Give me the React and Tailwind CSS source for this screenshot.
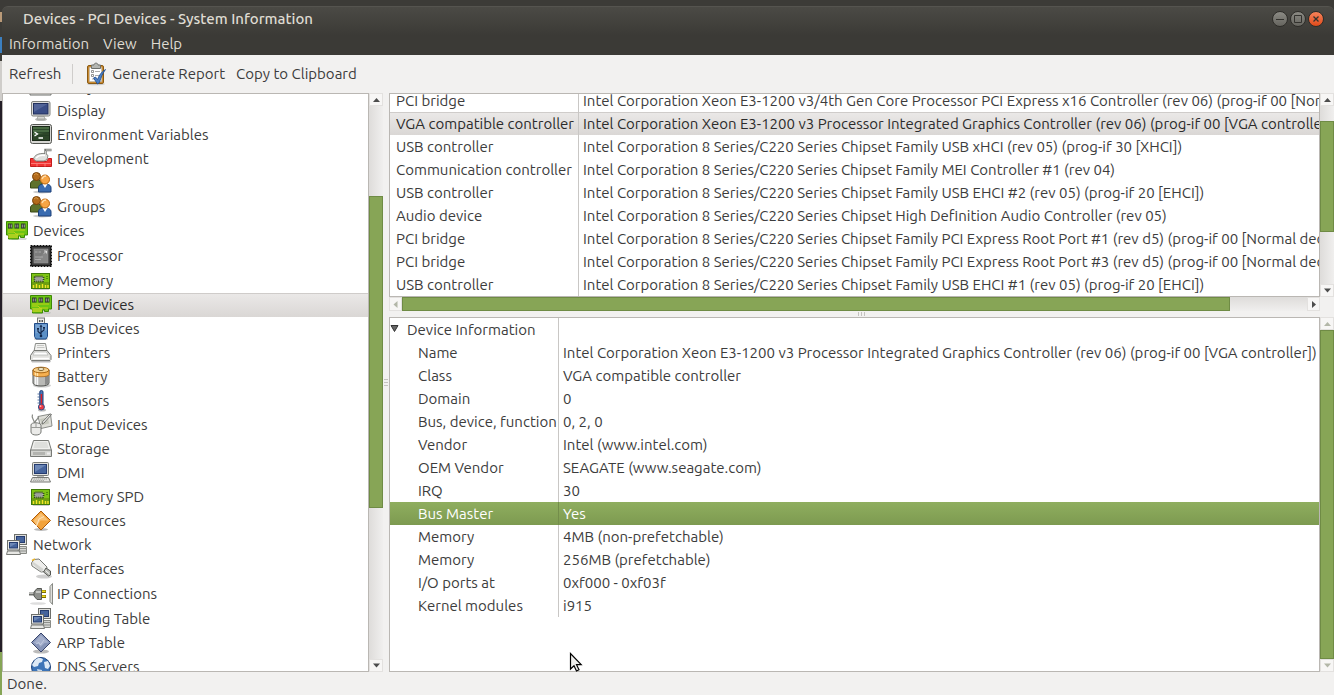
import React from "react";

const sheet = {
  filesystems: (
    <g>
      <path d="M3 6h17l2 8v6H1v-6z" fill="#e4e4e2" stroke="#6d6f6b" />
      <path d="M3 16h17v3H3z" fill="#b9bab7" />
    </g>
  ),
  display: (
    <g>
      <ellipse cx="12" cy="20.5" rx="6" ry="1.6" fill="#b9bab7" />
      <path d="M9 17h6l1 3H8z" fill="#d7d8d5" stroke="#8b8d89" strokeWidth=".6" />
      <rect x="2.500" y="2.500" width="18.500" height="14.500" rx="1.500" fill="#dcdcd9" stroke="#80827e" />
      <rect x="4.500" y="4.500" width="14.500" height="10.500" fill="#3a4d86" stroke="#22305c" />
      <path d="M5 5h13.500L5 13z" fill="#6274a5" opacity=".6" />
    </g>
  ),
  terminal: (
    <g>
      <rect x="1.500" y="1.500" width="21" height="19" rx="2" fill="#d6d6d3" stroke="#555753" />
      <rect x="3.500" y="3.500" width="17" height="14" fill="#2c4528" stroke="#1b2a1a" />
      <path d="M4 4h16v5L4 12z" fill="#5c8354" opacity=".6" />
      <path d="M4 6.500h16M4 9.500h16M4 12.500h16" stroke="#233c22" strokeWidth=".7" />
      <path d="M5.500 9l3 2-3 2M9.500 15h4.500" fill="none" stroke="#fff" strokeWidth="1.300" />
    </g>
  ),
  development: (
    <g>
      <path d="M1.500 11.500h4l2 3h10l2-3h3v8h-21z" fill="#f03433" stroke="#c41c1c" />
      <path d="M2 16.500h20M8 16.500v3M16 16.500v3" stroke="#ff8a86" strokeWidth=".8" />
      <path d="M4.500 12c1-4 5-6 12-5.500l2.500 2-1 4-3 1.500H7z" fill="#dfe0dd" stroke="#888a85" />
      <path d="M7 11c3-3 6-3 9-2.500" stroke="#fff" strokeWidth="1.500" fill="none" />
      <path d="M16.500 7V3H22.500" stroke="#777975" strokeWidth="2.400" fill="none" />
      <path d="M17 3h5M16.500 4v3" stroke="#dedfdc" strokeWidth=".8" />
    </g>
  ),
  people: (
    <g>
      <ellipse cx="13" cy="21" rx="9" ry="1.500" fill="#ccc" />
      <path d="M1.500 17v-4c0-3 3-4 6-4s5 1 6 4v4z" fill="#5e722c" stroke="#3a4a16" />
      <circle cx="7.500" cy="5.500" r="4" fill="#b36b1c" stroke="#7a4308" />
      <path d="M5 4q2-3 4 0" stroke="#d9963f" fill="none" />
      <path d="M9.500 21v-4c0-3 2-4 6-4s6.500 1 6.500 4v4z" fill="#3a6cb0" stroke="#1d417a" />
      <path d="M13.500 13l2.500 4 2.500-4z" fill="#fff" />
      <circle cx="16" cy="8.500" r="4.500" fill="#f7a545" stroke="#bf660c" />
      <path d="M13 8q1-3 4-3" stroke="#ffdba8" strokeWidth="1.500" fill="none" />
    </g>
  ),
  card: (
    <g>
      <path d="M8 19h14l-1 2H6z" fill="#bbb" opacity=".6" />
      <path d="M1.500 2.500h21v13.500h-3v2.500h-4V17h-2v3h-10v-4h-2z" fill="#6cc414" stroke="#3c8a05" />
      <path d="M3 11h17M3 13h6l2 2h8" stroke="#c5d316" fill="none" />
      <path d="M4 15v4M6 15v4M8 15v4M10 15v4M12 15v4" stroke="#e8dc2a" />
      <path d="M3 4.500h4.500v5H3zM9.500 4.500h4.500v5h-4.500zM16 4.500h4.500v5h-4.500z" fill="#2f3a2a" />
      <path d="M4.300 5.500v3M6.300 5.500v3M10.800 5.500v3M12.800 5.500v3M17.300 5.500v3M19.300 5.500v3" stroke="#b9bdb5" strokeWidth=".8" />
    </g>
  ),
  processor: (
    <g>
      <rect x="1.500" y="1.500" width="21" height="21" fill="none" stroke="#111" strokeDasharray="2 1" />
      <rect x="2.500" y="2.500" width="19" height="19" fill="#3d3d3d" stroke="#1a1a1a" />
      <rect x="5" y="5" width="14" height="14" fill="#7c7c7c" stroke="#9b9b9b" strokeWidth=".6" />
      <path d="M5 19L19 5v14z" fill="#929292" opacity=".5" />
      <path d="M6 8h2.500M9.500 8H12M6 13h8M6 15.500h6" stroke="#c4c4c4" strokeWidth="1.200" opacity=".6" />
      <path d="M15 7h2.500v2.500M17.500 7L15 9.500" stroke="#eee" strokeWidth=".8" fill="none" />
    </g>
  ),
  memory: (
    <g>
      <path d="M3 19h18l-1 2H4z" fill="#aaa" opacity=".6" />
      <rect x="2.500" y="4.500" width="18" height="15" fill="#7fc514" stroke="#3f7a08" />
      <path d="M3 13h17v6H3z" fill="#6d9f10" />
      <path d="M4.500 19v-3M7.500 19v-4M10.500 19v-3M13.500 19v-4M16.500 19v-3M19 19v-3" stroke="#f2e526" strokeWidth="1.400" />
      <rect x="5.500" y="7.500" width="9" height="5" rx="1" fill="#b4b6b1" stroke="#2d3824" strokeDasharray="1 1" strokeWidth="1.800" />
      <path d="M7 9h6v2H7z" fill="#9fa19c" />
      <path d="M17 7.500h2M17 9.500h2" stroke="#4f8c0a" />
    </g>
  ),
  usb: (
    <g>
      <ellipse cx="12" cy="22" rx="7" ry="1" fill="#bbb" />
      <rect x="8.500" y="1" width="7" height="7" fill="#eeeeec" stroke="#777975" />
      <path d="M10 3h1.500v2H10zM12.500 3H14v2h-1.500z" fill="#555" />
      <path d="M5.500 6.500h13v13l-1.500 2.500H7l-1.500-2.500z" fill="#5b8fc6" stroke="#204a87" />
      <path d="M6.500 7.500h11v6l-11 3z" fill="#8db3dc" opacity=".6" />
      <path d="M12 9v10M12 17l-3-2.500V12M12 15.500l3-2.500v-2" stroke="#11264a" strokeWidth="1.100" fill="none" />
      <path d="M12 7.500l1.500 2.300h-3z" fill="#11264a" />
      <circle cx="12" cy="19" r="1.300" fill="#11264a" />
      <path d="M8 11h2v1.500H8zM14 10h2v1.500h-2z" fill="#11264a" />
    </g>
  ),
  printer: (
    <g>
      <path d="M2 20h20l-1 1.500H3z" fill="#bbb" />
      <path d="M6.500 2.500h10l1.500 8H5z" fill="#f2f2f0" stroke="#8b8d89" />
      <path d="M8 4.500h7M8 6.500h7.500" stroke="#c6c7c4" />
      <path d="M5 9.500h13l4 5v4l-1 1H2.500l-1-1v-4z" fill="#e2e2df" stroke="#777975" />
      <path d="M5.500 11h12l1.500 3H4z" fill="#fff" stroke="#b3b4b1" strokeWidth=".7" />
      <path d="M4 17.500h16" stroke="#fff" strokeWidth="1.500" />
    </g>
  ),
  battery: (
    <g>
      <ellipse cx="13" cy="20.500" rx="9" ry="2" fill="#b8b8b8" opacity=".7" />
      <path d="M4 5v13c0 4 16 4 16 0V5z" fill="#b9b9b6" stroke="#555753" />
      <path d="M6.500 11v8.500M8.500 11v9" stroke="#f7f7f7" strokeWidth="1.500" />
      <path d="M16 11h3.500v7.500L16 20z" fill="#8b8b8b" />
      <path d="M4 5v4.500c0 3 16 3 16 0V5z" fill="#f6b050" stroke="#a35c09" strokeWidth=".7" />
      <path d="M6.500 7v3.500M8.500 7v4" stroke="#ffe3a9" strokeWidth="1.300" />
      <ellipse cx="12" cy="5" rx="8" ry="2.800" fill="#f5d08e" stroke="#a35c09" strokeWidth=".9" />
      <ellipse cx="12" cy="4" rx="3" ry="1.600" fill="#efe3c4" stroke="#80622d" strokeWidth=".9" />
    </g>
  ),
  sensors: (
    <g>
      <ellipse cx="13" cy="21" rx="4" ry="1.500" fill="#bbb" />
      <rect x="10.800" y="1.500" width="3.200" height="16" rx="1.500" fill="#4a76b8" stroke="#1d3c75" />
      <path d="M12.400 5v13" stroke="#e01e25" strokeWidth="1.400" />
      <path d="M8.500 5h2M8.500 8h2M8.500 11h2M8.500 14h2" stroke="#35568f" strokeWidth=".8" />
      <circle cx="12.400" cy="18" r="3" fill="#ee3a43" stroke="#31508b" />
      <circle cx="11.500" cy="17.200" r=".9" fill="#ffb4b8" />
    </g>
  ),
  input: (
    <g>
      <path d="M9 3.500L21.500 1l1.500 12-11 2.500z" fill="#deded8" stroke="#8b8d89" />
      <path d="M11 6l8-1.500 1 6-7 1.500z" fill="#c6c8bd" />
      <path d="M22.500 1.500L15 10l-2 1 .5-2.200L21 1z" fill="#f2f2ef" stroke="#666864" strokeWidth=".9" />
      <path d="M5.500 10C5 6 2 5 3.500 1.500M6 10c0-4 4-3 3.500-7" fill="none" stroke="#888a85" strokeWidth="1.200" />
      <path d="M2 12c0-3 9-3 10 0v7c0 4-10 4-10 0z" fill="#ebebe9" stroke="#777975" />
      <path d="M2 14.500h10M7 10v4.500" stroke="#999a97" />
    </g>
  ),
  storage: (
    <g>
      <path d="M4.500 3.500h15l3 10H1.500z" fill="#f0f0ee" stroke="#777975" />
      <path d="M6 5h12l1.500 6h-15z" fill="#d6d7d4" opacity=".7" />
      <path d="M1.500 13h21v6.500h-21z" fill="#d3d4d0" stroke="#777975" />
      <path d="M5 15v3M7 15v3M9 15v3M11 15v3M13 15v3M15 15v3" stroke="#92938f" />
      <path d="M18 15.500h3v2h-3z" fill="#eee" />
    </g>
  ),
  computer: (
    <g>
      <rect x="3.500" y="1.500" width="16" height="13" rx="1" fill="#e1e1de" stroke="#777975" />
      <rect x="5.500" y="3.500" width="12" height="9" fill="#46649c" stroke="#253c70" />
      <path d="M6 4h11L6 11z" fill="#7c95c2" opacity=".7" />
      <path d="M8 15h7v2H8z" fill="#b9bab7" />
      <path d="M3.500 16.500h16l2 4.500h-20z" fill="#e7e7e4" stroke="#777975" />
      <path d="M4.500 18h14M4 19.700h11" stroke="#9fa09d" strokeDasharray="1.500 .5" />
    </g>
  ),
  resources: (
    <g>
      <ellipse cx="12" cy="20.500" rx="7" ry="1.500" fill="#bbb" />
      <path d="M12 2l9.500 9.500L12 21 2.500 11.500z" fill="#f2a23a" stroke="#ad5a08" />
      <path d="M12 4l7.500 7.500h-8L7.500 17l-3-5.500z" fill="#fbd59c" opacity=".6" />
      <path d="M7.500 17l2.500-7 5-2.500" stroke="#fce3bd" fill="none" />
    </g>
  ),
  network: (
    <g>
      <rect x="9.500" y="1.500" width="12" height="10" fill="#dededb" stroke="#6d6f6b" />
      <rect x="11.500" y="3.500" width="8" height="6" fill="#46649c" stroke="#253c70" />
      <path d="M12 13.500h9.500v7H14z" fill="#d4d5d2" stroke="#888a85" />
      <path d="M14 15.500h8M14 18h8" stroke="#8d8f8b" />
      <rect x="2.500" y="7.500" width="12" height="9.500" fill="#e8e8e5" stroke="#6d6f6b" />
      <rect x="4.500" y="9.500" width="8" height="5.500" fill="#46649c" stroke="#253c70" />
      <path d="M5 10h7l-7 4z" fill="#7c95c2" opacity=".7" />
      <path d="M2.500 18h12l1 3.500h-14z" fill="#e7e7e4" stroke="#777975" />
    </g>
  ),
  interfaces: (
    <g>
      <ellipse cx="15" cy="19.500" rx="8" ry="2" fill="#bbb" opacity=".7" />
      <path d="M2.500 6L5 2.500l5-.5 8 8-1 4.500-5 .5-9-6z" fill="#eeeeec" stroke="#777975" />
      <path d="M3 6.500L4.500 5l10 7-2 3z" fill="#d3d4d1" />
      <path d="M3 3.500l3-1.500" stroke="#e8b52f" strokeWidth="1.500" />
      <path d="M17 11l4.500 3v4l-2 1-5-4z" fill="#b4b6b1" stroke="#555753" />
      <path d="M16.500 13.500l4 3.500" stroke="#f7f7f7" />
    </g>
  ),
  plug: (
    <g>
      <ellipse cx="9" cy="21.500" rx="8" ry="1.300" fill="#ddd" />
      <path d="M0 12h6" stroke="#6d6f6b" strokeWidth="3" />
      <path d="M0 11.500h6" stroke="#b9bab7" />
      <path d="M5 10l3-3.500h4.500v11H8L5 14z" fill="#8e908c" stroke="#555753" />
      <path d="M7 10h5" stroke="#d7d8d5" strokeWidth="1.500" />
      <path d="M13 9.500h4M13 14.500h4" stroke="#7a6a00" strokeWidth="3" />
      <path d="M13 9.300h3.500M13 14.300h3.500" stroke="#f0dc1c" strokeWidth="1.500" />
      <path d="M23.500 1.500v21l-2.500-3v-15z" fill="#dededb" stroke="#888a85" />
    </g>
  ),
  arp: (
    <g>
      <ellipse cx="12" cy="20.500" rx="8" ry="2" fill="#aaa" opacity=".8" />
      <path d="M12 2l9.500 9.500L12 21 2.500 11.500z" fill="#8795b8" stroke="#38456c" />
      <path d="M12 4l7.500 7.500-4 .5-4 4-2-3-5-1z" fill="#c3cbe0" opacity=".5" />
      <path d="M7 13l3-1.500 1.500 2.500 3.500-5" stroke="#c9d1e6" strokeWidth=".8" fill="none" />
    </g>
  ),
  globe: (
    <g>
      <circle cx="12" cy="12" r="9.500" fill="#3c74b8" stroke="#1d417a" />
      <path d="M6 5c3-3 6-2 8-1l-1 3-3 1-1 3-4 1-2-2zM15 7l4-1 2 5-2 3-3-1z" fill="#dce9f6" />
      <path d="M8 14l5 1v4l-2 2-2-3z" fill="#c6daee" />
    </g>
  ),
};

function Icon({ name }) {
  return (
    <svg viewBox="0 0 24 24" className="size-6 shrink-0" aria-hidden="true">
      {sheet[name]}
    </svg>
  );
}

const tree = [
  { label: "Filesystems", icon: "filesystems" },
  { label: "Display", icon: "display" },
  { label: "Environment Variables", icon: "terminal" },
  { label: "Development", icon: "development" },
  { label: "Users", icon: "people" },
  { label: "Groups", icon: "people" },
  { label: "Devices", icon: "card", top: true },
  { label: "Processor", icon: "processor", tall: true },
  { label: "Memory", icon: "memory" },
  { label: "PCI Devices", icon: "card", selected: true },
  { label: "USB Devices", icon: "usb" },
  { label: "Printers", icon: "printer" },
  { label: "Battery", icon: "battery" },
  { label: "Sensors", icon: "sensors" },
  { label: "Input Devices", icon: "input" },
  { label: "Storage", icon: "storage" },
  { label: "DMI", icon: "computer" },
  { label: "Memory SPD", icon: "memory" },
  { label: "Resources", icon: "resources" },
  { label: "Network", icon: "network", top: true },
  { label: "Interfaces", icon: "interfaces" },
  { label: "IP Connections", icon: "plug", tall: true },
  { label: "Routing Table", icon: "network" },
  { label: "ARP Table", icon: "arp" },
  { label: "DNS Servers", icon: "globe" },
];

const family = "Intel Corporation 8 Series/C220 Series Chipset";
const devices = [
  ["PCI bridge", "Intel Corporation Xeon E3-1200 v3/4th Gen Core Processor PCI Express x16 Controller (rev 06) (prog-if 00 [Normal decode])"],
  ["VGA compatible controller", "Intel Corporation Xeon E3-1200 v3 Processor Integrated Graphics Controller (rev 06) (prog-if 00 [VGA controller])"],
  ["USB controller", `${family} Family USB xHCI (rev 05) (prog-if 30 [XHCI])`],
  ["Communication controller", `${family} Family MEI Controller #1 (rev 04)`],
  ["USB controller", `${family} Family USB EHCI #2 (rev 05) (prog-if 20 [EHCI])`],
  ["Audio device", `${family} High Definition Audio Controller (rev 05)`],
  ["PCI bridge", `${family} Family PCI Express Root Port #1 (rev d5) (prog-if 00 [Normal decode])`],
  ["PCI bridge", `${family} Family PCI Express Root Port #3 (rev d5) (prog-if 00 [Normal decode])`],
  ["USB controller", `${family} Family USB EHCI #1 (rev 05) (prog-if 20 [EHCI])`],
];

const details = [
  ["Name", devices[1][1]],
  ["Class", "VGA compatible controller"],
  ["Domain", "0"],
  ["Bus, device, function", "0, 2, 0"],
  ["Vendor", "Intel (www.intel.com)"],
  ["OEM Vendor", "SEAGATE (www.seagate.com)"],
  ["IRQ", "30"],
  ["Bus Master", "Yes"],
  ["Memory", "4MB (non-prefetchable)"],
  ["Memory", "256MB (prefetchable)"],
  ["I/O ports at", "0xf000 - 0xf03f"],
  ["Kernel modules", "i915"],
];

const arrows = {
  up: "M0 6l3.500-4L7 6z",
  down: "M0 1.500h7l-3.500 4z",
  left: "M5.500 0v7L1.500 3.500z",
  right: "M2 0v7l4-3.500z",
};

function Arrow({ dir, dim, label }) {
  const side = dir === "left" || dir === "right";
  return (
    <button
      aria-label={label}
      className={
        "flex shrink-0 items-center justify-center border border-[#e3e1df] bg-[#f7f6f5] " +
        (side ? "h-full w-[13px]" : "h-[13px] w-full")
      }
    >
      <svg viewBox="0 0 7 7" className="size-[7px]">
        <path d={arrows[dir]} fill={dim ? "#b3b7a8" : "#4c4c4c"} />
      </svg>
    </button>
  );
}

function VerticalBar({ before, thumb, after, name, dimUp, dimDown }) {
  return (
    <div className="flex w-[14px] shrink-0 flex-col bg-linear-to-r from-[#dedcda] to-[#f0efee]">
      <Arrow dir="up" dim={dimUp} label={`Scroll ${name} up`} />
      <div className={before} />
      <div className={`border border-[#6f8b45] bg-[#87a556] ${thumb}`} />
      <div className={after} />
      <Arrow dir="down" dim={dimDown} label={`Scroll ${name} down`} />
    </div>
  );
}

function TitleButton({ label, close, children }) {
  return (
    <button
      aria-label={label}
      className={
        "flex size-4 items-center justify-center rounded-full border border-[#2e2d29] bg-linear-to-b " +
        (close ? "from-[#f58259] to-[#df4a16]" : "from-[#8b8a84] to-[#66655f]")
      }
    >
      <svg viewBox="0 0 8 8" className="size-2 shrink-0" fill="none" stroke="#33322e">
        {children}
      </svg>
    </button>
  );
}

export default function App() {
  return (
    <div className="flex h-screen cursor-default overflow-hidden bg-[#3c3b37] font-['Ubuntu','Noto_Sans',sans-serif] text-[15px] leading-[23px] whitespace-nowrap text-[#3c3c3c]">
      <div className="flex w-[2px] shrink-0 flex-col">
        <div className="h-3" />
        <div className="h-[10px] bg-[#b99a78]" />
        <div className="h-[15px]" />
        <div className="h-4 bg-[#3b7fc0]" />
        <div className="h-2" />
        <div className="h-10 bg-[#cfcdca]" />
        <div className="flex-1 bg-[#241e27]" />
        <div className="h-[43px] bg-[#86a556]" />
      </div>

      <div className="flex min-w-0 flex-1 flex-col pt-[6px]">
        <header className="rounded-t-[6px] border-t border-[#55544f] bg-linear-to-b from-[#4b4a45] to-[#3b3a36] to-60% text-[#dfdbd2]">
          <div className="flex h-[25px] items-center justify-between pr-[10px] pb-px pl-[21px] leading-[22px]">
            <h1 className="font-medium">Devices - PCI Devices - System Information</h1>
            <div className="flex gap-[2px]">
              <TitleButton label="Minimize">
                <path d="M0 4.500h8" />
              </TitleButton>
              <TitleButton label="Maximize">
                <path d="M.5.5h7v7h-7z" />
              </TitleButton>
              <TitleButton label="Close" close>
                <path d="M1.500 1.500l5 5M6.500 1.500l-5 5" strokeWidth="1.300" />
              </TitleButton>
            </div>
          </div>
          <nav className="flex h-[23px] items-center gap-[14px] pl-[7px]">
            <button>Information</button>
            <button>View</button>
            <button>Help</button>
          </nav>
        </header>

        <div className="flex min-h-0 flex-1 flex-col bg-[#f2f1f0]">
          <div className="flex h-[38px] shrink-0 items-center pl-[7px] leading-[22px]">
            <button>Refresh</button>
            <div className="mx-[11px] h-5 w-px bg-[#cfcdcb]" />
            <button className="flex items-center gap-1">
              <svg viewBox="0 0 24 24" className="size-6" aria-hidden="true">
                <ellipse cx="12" cy="22" rx="9" ry="1.300" fill="#ccc" />
                <rect x="3.500" y="3.500" width="16" height="18" rx="1.500" fill="#c98b34" stroke="#8a5a12" />
                <path d="M5.500 5.500h12v14h-12z" fill="#fff" stroke="#b9bab7" strokeWidth=".6" />
                <path d="M7.500 4.500V3h2.500c0-2.500 4-2.500 4 0h2.500v3.500h-9z" fill="#b4b6b1" stroke="#6d6f6b" />
                <path d="M7.500 8.500h2v2h-2zM7.500 12.500h2v2h-2z" fill="none" stroke="#777" strokeWidth=".8" />
                <path d="M11 9.500h5M11 13.500h4M8 17h3" stroke="#aaa" />
                <path d="M9.500 16l2-1 2 2.500C15 13 18 9.500 21.500 7.500 19 11 17 15 15.500 20.500L13.500 22z" fill="#4a7fc4" stroke="#1e4a8c" strokeWidth=".8" />
              </svg>
              Generate Report
            </button>
            <button className="ml-[11px]">Copy to Clipboard</button>
          </div>

          <main className="flex min-h-0 flex-1">
            <div className="flex w-[381px] shrink-0">
              <div className="min-w-0 flex-1 overflow-hidden border border-[#bab7b3] bg-white">
                <ul className="-mt-[19px] leading-[22px]">
                  {tree.map((item) => (
                    <li
                      key={item.label}
                      className={
                        "flex items-center gap-1 " +
                        (item.tall ? "h-[26px] " : "h-6 ") +
                        (item.top ? "pl-[2px] " : "pl-[26px] ") +
                        (item.selected
                          ? "bg-linear-to-b from-[#cfccca] from-4% via-[#eae8e7] via-5% to-[#dad7d5] text-[#2b2b2b]"
                          : "")
                      }
                    >
                      <Icon name={item.icon} />
                      <span>{item.label}</span>
                    </li>
                  ))}
                </ul>
              </div>
              <VerticalBar name="categories" before="flex-[90]" thumb="flex-[309]" after="flex-[151]" />
            </div>

            <div className="flex w-[6px] shrink-0 flex-col items-center justify-center gap-[2px]">
              <i className="h-px w-1 bg-[#c4c2bf]" />
              <i className="h-px w-1 bg-[#c4c2bf]" />
              <i className="h-px w-1 bg-[#c4c2bf]" />
            </div>

            <div className="flex min-w-0 flex-1 flex-col">
              <div className="flex h-[204px] shrink-0">
                <div className="min-w-0 flex-1 overflow-hidden border border-[#bab7b3] bg-white">
                  <table className="-mt-[5px] min-w-full border-separate border-spacing-0">
                    <tbody>
                      {devices.map(([kind, name], i) => (
                        <tr
                          key={i}
                          className={
                            "h-[23px] " +
                            (i === 1 ? "bg-linear-to-b from-[#cfccca] from-4% via-[#eae8e7] via-5% to-[#dad7d5] text-[#2b2b2b]" : "")
                          }
                        >
                          <td className="w-[189px] min-w-[189px] border-r border-[#c9c7c5] p-0 pl-[6px]">{kind}</td>
                          <td className="p-0 pl-1">{name}</td>
                        </tr>
                      ))}
                    </tbody>
                  </table>
                </div>
                <VerticalBar name="devices" before="flex-[15]" thumb="flex-[109]" after="flex-[52]" />
              </div>

              <div className="mr-[14px] flex h-[14px] shrink-0 bg-linear-to-b from-[#dedcda] to-[#f0efee]">
                <Arrow dir="left" dim label="Scroll devices left" />
                <div className="flex-[826] border border-[#6f8b45] bg-[#87a556]" />
                <div className="flex-[77]" />
                <Arrow dir="right" label="Scroll devices right" />
              </div>

              <div className="flex h-[6px] shrink-0 items-center justify-center gap-[2px]">
                <i className="h-1 w-px bg-[#c4c2bf]" />
                <i className="h-1 w-px bg-[#c4c2bf]" />
                <i className="h-1 w-px bg-[#c4c2bf]" />
              </div>

              <div className="flex min-h-0 flex-1">
                <div className="min-w-0 flex-1 overflow-hidden border border-[#bab7b3] bg-white">
                  <table className="min-w-full border-separate border-spacing-0">
                    <tbody>
                      <tr className="h-[23px]">
                        <th className="w-[169px] min-w-[169px] border-r border-[#c9c7c5] p-0 text-left font-normal">
                          <button className="flex items-center gap-2" aria-expanded="true">
                            <svg viewBox="0 0 9 9" className="size-[9px]">
                              <path d="M1 .5h7L4.500 6.500z" fill="#666" stroke="#333" />
                            </svg>
                            Device Information
                          </button>
                        </th>
                        <td className="p-0" />
                      </tr>
                      {details.map(([key, value], i) => (
                        <tr
                          key={i}
                          className={
                            "h-[23px] " +
                            (key === "Bus Master" ? "bg-linear-to-b from-[#8fae5f] to-[#7d9a50] text-white" : "")
                          }
                        >
                          <th
                            className={
                              "border-r p-0 pl-7 text-left font-normal " +
                              (key === "Bus Master" ? "border-[#738d4a]" : "border-[#c9c7c5]")
                            }
                          >
                            {key}
                          </th>
                          <td className="p-0 pl-1">{value}</td>
                        </tr>
                      ))}
                    </tbody>
                  </table>
                </div>
                <VerticalBar name="details" before="flex-none" thumb="flex-1" after="flex-none" dimUp dimDown />
              </div>
            </div>
          </main>

          <footer className="h-[23px] shrink-0 pl-[5px] leading-6">Done.</footer>
        </div>
      </div>

      <svg viewBox="0 0 14 20" className="pointer-events-none absolute top-[652px] left-[569px] h-5 w-[14px]" aria-hidden="true">
        <path d="M1.500 1.500v15.500l3.500-3.300 2.500 5.300 2.500-1.200-2.500-5.100h4.700z" fill="#eeeeec" stroke="#000" strokeWidth="1.200" />
      </svg>
    </div>
  );
}
